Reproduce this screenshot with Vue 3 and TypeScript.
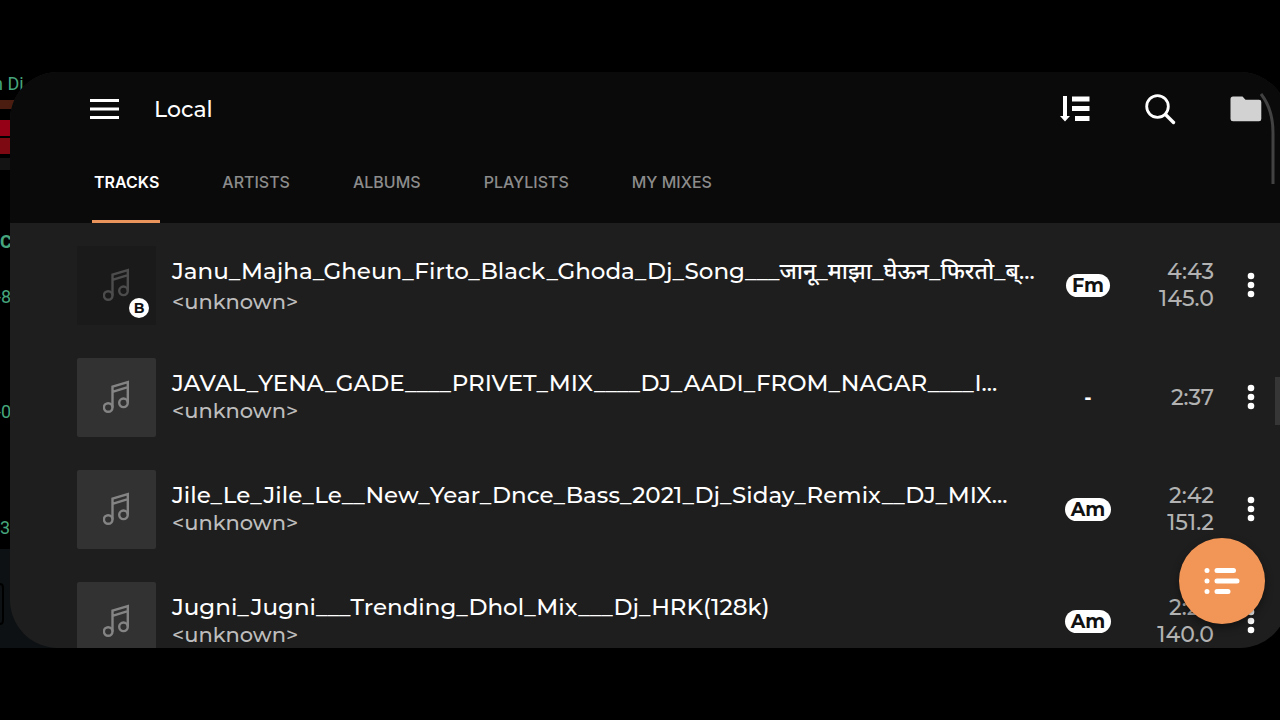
<script setup lang="ts">
import { ref } from 'vue'

interface Track {
  title: string
  artist: string
  musicalKey?: string
  time: string
  bpm?: string
  loaded?: string
}

const tabs: string[] = ['Tracks', 'Artists', 'Albums', 'Playlists', 'My mixes']
const activeTab = ref('Tracks')

const tracks: Track[] = [
  {
    title: 'Janu_Majha_Gheun_Firto_Black_Ghoda_Dj_Song___जानू_माझा_घेऊन_फिरतो_ब्...',
    artist: '<unknown>',
    musicalKey: 'Fm',
    time: '4:43',
    bpm: '145.0',
    loaded: 'B',
  },
  {
    title: 'JAVAL_YENA_GADE____PRIVET_MIX____DJ_AADI_FROM_NAGAR____I...',
    artist: '<unknown>',
    time: '2:37',
  },
  {
    title: 'Jile_Le_Jile_Le__New_Year_Dnce_Bass_2021_Dj_Siday_Remix__DJ_MIX...',
    artist: '<unknown>',
    musicalKey: 'Am',
    time: '2:42',
    bpm: '151.2',
  },
  {
    title: 'Jugni_Jugni___Trending_Dhol_Mix___Dj_HRK(128k)',
    artist: '<unknown>',
    musicalKey: 'Am',
    time: '2:20',
    bpm: '140.0',
  },
]
</script>

<template>
  <div class="page">
    <div class="stage">
      <svg class="deck" width="60" height="576" aria-hidden="true">
        <rect x="0" y="28" width="16" height="9" fill="#4a1d10" />
        <rect x="0" y="48" width="16" height="16" fill="#960016" />
        <rect x="0" y="66" width="16" height="16" fill="#7d0a12" />
        <rect x="0" y="86" width="16" height="12" fill="#131313" />
        <rect x="0" y="477" width="60" height="99" fill="#0d1113" />
        <path d="M0 512q3 0 3 4v32q0 4-3 4" fill="none" stroke="#000" stroke-width="2" />
        <g class="deck-text">
          <text x="-7" y="18">n Di .</text>
          <text x="0" y="176" font-weight="700">C</text>
          <text x="-4" y="231">-8</text>
          <text x="-4" y="346">-0</text>
          <text x="0" y="462">3</text>
        </g>
      </svg>

      <main class="panel">
        <header class="header">
          <div class="toolbar">
            <button class="icon-btn" aria-label="Menu">
              <svg width="30" height="22" viewBox="0 0 30 22">
                <path d="M0 2.500h29M0 11h29M0 19.500h29" stroke="#fff" stroke-width="3" />
              </svg>
            </button>
            <h1>Local</h1>
            <button class="icon-btn" aria-label="Sort">
              <svg width="30" height="28" viewBox="0 0 30 28">
                <path d="M3 1h4v20h3l-5 5.500L0 21h3zM12 1.500h17.500v5H12zM12 11h17.500v5H12zM15 21h14.500v5H15z" fill="#fff" />
              </svg>
            </button>
            <button class="icon-btn" aria-label="Search">
              <svg width="32" height="32" viewBox="0 0 32 32" fill="none" stroke="#fff">
                <circle cx="13.500" cy="13.500" r="10.800" stroke-width="2.800" />
                <path d="M21.500 21.500l8 8" stroke-width="3.400" stroke-linecap="round" />
              </svg>
            </button>
            <button class="icon-btn" aria-label="Folders">
              <svg width="32" height="26" viewBox="0 0 32 26">
                <path d="M3 .5h9.500l3 3.200H29q2.300 0 2.300 2.300v17q0 2.300-2.300 2.300H3Q.5 25.300.5 23V3Q.5.5 3 .5z" fill="#d2d2d2" />
              </svg>
            </button>
          </div>
          <nav class="tabs">
            <button
              v-for="tab in tabs"
              :key="tab"
              class="tab"
              :class="{ active: tab === activeTab }"
              @click="activeTab = tab"
            >{{ tab }}</button>
          </nav>
        </header>

        <ul class="list">
          <li v-for="(track, i) in tracks" :key="i" class="row">
            <div class="art" :class="{ dim: track.loaded }">
              <svg width="28" height="34" viewBox="0 0 28 34" fill="none" stroke="currentColor" stroke-width="2.400">
                <circle cx="5.200" cy="27.500" r="4.300" />
                <circle cx="20.500" cy="22.800" r="4.300" />
                <path d="M9.500 27.500V6.600L24.800 2v20.800M9.500 11.800L24.800 7.200" />
              </svg>
              <span v-if="track.loaded" class="deck-badge">{{ track.loaded }}</span>
            </div>
            <div class="info" :class="{ tall: track.loaded }">
              <p class="title">{{ track.title }}</p>
              <p class="artist">{{ track.artist }}</p>
            </div>
            <div class="key">
              <span v-if="track.musicalKey" class="pill">{{ track.musicalKey }}</span>
              <span v-else>-</span>
            </div>
            <div class="meta">
              <span>{{ track.time }}</span>
              <span v-if="track.bpm">{{ track.bpm }}</span>
            </div>
            <button class="more" aria-label="Track options">
              <svg width="8" height="26" viewBox="0 0 8 26" fill="#fff">
                <circle cx="4" cy="4" r="3.300" />
                <circle cx="4" cy="13" r="3.300" />
                <circle cx="4" cy="22" r="3.300" />
              </svg>
            </button>
          </li>
        </ul>
      </main>

      <svg class="edge" width="20" height="92" viewBox="0 0 20 92" aria-hidden="true">
        <path d="M1 1Q13 16 13 40V91" fill="none" stroke="#424242" stroke-width="3" />
      </svg>
      <div class="thumb"></div>
      <button class="fab" aria-label="Queue">
        <svg width="36" height="28" viewBox="0 0 36 28" stroke="#fff" stroke-width="5" stroke-linecap="round">
          <path d="M3 3.500h.01M3 14h.01M3 24.500h.01M13 3.500h16.500M13 14h20M13 24.500h11" />
        </svg>
      </button>
    </div>
  </div>
</template>

<style>
html,
body {
  background: #000;
}
</style>

<style scoped>
.page {
  box-sizing: border-box;
  height: 100vh;
  padding: 72px 0;
  background: #000;
  color: #fff;
  font-family: Montserrat, Inter, "Noto Sans", sans-serif;
}

.stage {
  position: relative;
  height: 100%;
  overflow: hidden;
}

.deck {
  position: absolute;
  left: 0;
  top: 0;
}

.deck-text {
  fill: #46a57c;
  font-family: Roboto, sans-serif;
  font-size: 18px;
}

.panel {
  position: relative;
  height: 100%;
  margin: 0 -8px 0 10px;
  overflow: hidden;
  border-radius: 48px;
  background: #1e1e1e;
}

button {
  padding: 0;
  border: 0;
  background: none;
  color: inherit;
  font: inherit;
  cursor: pointer;
}

svg {
  display: block;
}

.header {
  background: #0a0a0a;
}

.toolbar {
  display: flex;
  align-items: center;
  gap: 54px;
  height: 74px;
  padding: 0 26px 0 80px;
}

h1 {
  flex: 1;
  margin: 0 0 0 -20px;
  font-size: 22px;
  font-weight: 500;
}

.tabs {
  display: flex;
  gap: 60px;
  height: 77px;
  padding-left: 82px;
}

.tab {
  box-sizing: border-box;
  padding: 0 1px 2px 2px;
  border-bottom: 3px solid transparent;
  color: #8c8c8c;
  font-family: Inter, sans-serif;
  font-size: 16px;
  font-weight: 500;
  text-transform: uppercase;
}

.tab.active {
  border-bottom-color: #ea935a;
  color: #fff;
  font-weight: 600;
}

.list {
  margin: 0;
  padding: 6px 0 0;
  list-style: none;
}

.row {
  display: flex;
  align-items: center;
  height: 112px;
  padding: 0 12px 0 67px;
}

.art {
  position: relative;
  display: grid;
  flex: none;
  place-items: center;
  width: 79px;
  height: 79px;
  margin-right: 16px;
  border-radius: 2px;
  background: #323232;
  color: #848484;
}

.art.dim {
  background: #1a1a1a;
  color: #4c4c4c;
}

.deck-badge {
  position: absolute;
  right: 7px;
  bottom: 7px;
  width: 20px;
  border-radius: 50%;
  background: #fff;
  color: #111;
  font-size: 14px;
  font-weight: 700;
  line-height: 20px;
  text-align: center;
}

.info {
  flex: 1;
  min-width: 0;
  font-size: 21px;
  line-height: 27px;
  white-space: nowrap;
}

.info p {
  margin: 0;
}

.title {
  font-size: 23px;
  font-weight: 500;
}

.tall .title {
  line-height: 33px;
}

.artist {
  color: #bdbdbd;
  font-weight: 500;
}

.key {
  width: 60px;
  font-size: 19px;
  font-weight: 700;
  text-align: center;
}

.pill {
  display: inline-block;
  padding: 0 6px;
  border-radius: 12px;
  background: #fff;
  color: #111;
  line-height: 23px;
}

.meta {
  display: flex;
  flex-direction: column;
  width: 96px;
  color: #b2b2b2;
  font-size: 22px;
  font-weight: 500;
  line-height: 27px;
  text-align: right;
}

.more {
  display: grid;
  place-items: center;
  width: 50px;
  height: 50px;
  margin-left: 12px;
}

.edge {
  position: absolute;
  top: 21px;
  right: 0;
}

.thumb {
  position: absolute;
  top: 305px;
  right: 0;
  width: 5px;
  height: 48px;
  background: #363636;
}

.fab {
  position: absolute;
  right: 15px;
  bottom: 24px;
  display: grid;
  place-items: center;
  width: 86px;
  height: 86px;
  border-radius: 50%;
  background: #f29657;
  box-shadow: 0 4px 8px rgba(0, 0, 0, 0.4);
}
</style>
